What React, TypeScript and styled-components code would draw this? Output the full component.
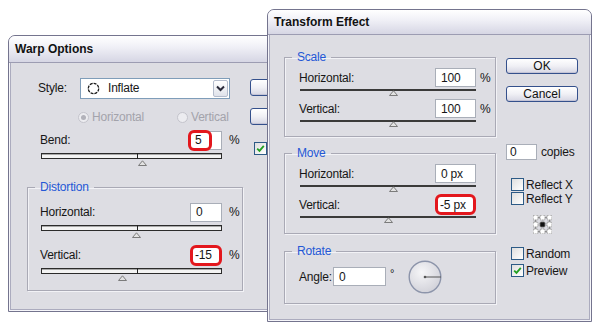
import React from 'react';
import styled, { createGlobalStyle } from 'styled-components';

const Global = createGlobalStyle`
  html, body { margin: 0; padding: 0; background: #fff; }
  body {
    font-family: "Liberation Sans", Arial, sans-serif;
    font-size: 12px;
    letter-spacing: -0.2px;
    color: #161616;
  }
`;

const Desktop = styled.div`
  position: relative;
  width: 600px;
  height: 330px;
  overflow: hidden;
  background: #fff;
`;

const Win = styled.div<{ $x: number; $y: number; $w: number; $h: number }>`
  position: absolute;
  left: ${p => p.$x}px;
  top: ${p => p.$y}px;
  width: ${p => p.$w}px;
  height: ${p => p.$h}px;
  box-sizing: border-box;
  display: flex;
  flex-direction: column;
  border: 1px solid #74748e;
  border-radius: 7px 7px 0 0;
  background: #dddde3;
  box-shadow: inset 0 0 0 1px #f6f6fa, inset 0 0 0 2px #ababbe;
  overflow: hidden;
`;

const TitleBar = styled.div<{ $h: number }>`
  flex: none;
  height: ${p => p.$h}px;
  display: flex;
  align-items: center;
  padding-left: 6px;
  border-bottom: 1px solid #9c9cb2;
  background: linear-gradient(#ffffff 0%, #f1f1f7 40%, #d6d6e4 100%);
  font-weight: bold;
  font-size: 12px;
  letter-spacing: 0;
  color: #121212;
`;

/* ---------- Warp window ---------- */

const WarpBody = styled.div`
  flex: 1;
  display: grid;
  grid-template-columns: 216px 80px;
  column-gap: 7px;
  align-items: start;
  padding-left: 18px;
`;

const Column = styled.div`
  display: flex;
  flex-direction: column;
  align-items: flex-start;
`;

const StyleRow = styled.div`
  margin-top: 14px;
  height: 22px;
  display: flex;
  align-items: center;
  padding-left: 11px;
`;

const StyleLabel = styled.span`
  width: 42px;
`;

const Select = styled.div`
  box-sizing: border-box;
  width: 150px;
  height: 21px;
  display: flex;
  align-items: center;
  background: #fff;
  border: 1px solid #7f9db9;
`;

const InflateIcon = styled.svg`
  margin-left: 6px;
  display: block;
`;

const SelectText = styled.span`
  margin-left: 8px;
`;

const DropBtn = styled.div`
  box-sizing: border-box;
  margin-left: auto;
  margin-right: 1px;
  width: 15px;
  height: 17px;
  display: flex;
  align-items: center;
  justify-content: center;
  border: 1px solid #b4bccc;
  border-radius: 2px;
  background: linear-gradient(#ffffff, #dfe2ea);
`;

const RadioRow = styled.div`
  margin-top: 11px;
  height: 11px;
  display: grid;
  grid-template-columns: 99px auto;
  padding-left: 51px;
  color: #a3a3ab;
`;

const RadioItem = styled.label`
  display: flex;
  align-items: center;
  gap: 3px;
`;

const Radio = styled.span<{ $on?: boolean }>`
  box-sizing: border-box;
  width: 11px;
  height: 11px;
  border-radius: 50%;
  border: 1px solid #c4c4cc;
  background: #ececf0;
  display: flex;
  align-items: center;
  justify-content: center;
  &::after {
    content: '';
    width: 5px;
    height: 5px;
    border-radius: 50%;
    background: ${p => (p.$on ? '#b2b2ba' : 'transparent')};
  }
`;

const WarpParamGrid = styled.div<{ $mt: number; $ml?: number }>`
  margin-top: ${p => p.$mt}px;
  margin-left: ${p => p.$ml ?? 0}px;
  width: 203px;
  display: grid;
  grid-template-columns: 1fr 32px 21px;
  grid-template-rows: 20px 6px;
  row-gap: 3px;
  align-items: center;
`;

const Unit = styled.span<{ $pl: number }>`
  padding-left: ${p => p.$pl}px;
`;

const WarpTrack = styled.div`
  grid-column: 1 / 3;
  position: relative;
  align-self: stretch;
  box-sizing: border-box;
  margin-left: 1px;
  border: 1px solid #2b2b2b;
  background: linear-gradient(#a8a8a8 0 1px, #f3f3f3 1px);
  &::after {
    content: '';
    position: absolute;
    left: 53%;
    top: -1px;
    bottom: -1px;
    width: 1px;
    background: #222;
  }
`;

const TxTrack = styled.div`
  grid-column: 1 / 3;
  position: relative;
  align-self: stretch;
  margin-left: 1px;
  background: #3a3a3a;
`;

const ThumbSvg = styled.svg<{ $pos: number; $top: number }>`
  position: absolute;
  left: calc(${p => p.$pos}% - 4.5px);
  top: ${p => p.$top}px;
  display: block;
`;

const Field = styled.div<{ $w: number; $h?: number; $mark?: boolean; $pl?: number }>`
  position: relative;
  box-sizing: border-box;
  width: ${p => p.$w}px;
  height: ${p => p.$h ?? 19}px;
  display: flex;
  align-items: center;
  padding-left: ${p => (p.$mark ? 2 : p.$pl ?? 5)}px;
  background: #fff;
  border: ${p => (p.$mark ? '3px solid #e3171d' : '1px solid #a9aeb8')};
  border-radius: ${p => (p.$mark ? '6px' : '0')};
`;

const PartMark = styled.span`
  position: absolute;
  left: -3px;
  top: -2px;
  width: 24px;
  height: 21px;
  box-sizing: border-box;
  border: 3px solid #e3171d;
  border-radius: 6px;
  display: flex;
  align-items: center;
  padding-left: 4px;
  background: #fff;
`;

const Group = styled.fieldset<{ $w: number; $mt: number; $pt: number; $pb: number; $pl: number }>`
  box-sizing: border-box;
  width: ${p => p.$w}px;
  margin: ${p => p.$mt}px 0 0 0;
  padding: ${p => p.$pt}px 0 ${p => p.$pb}px ${p => p.$pl}px;
  min-inline-size: 0;
  border: 1px solid #a9a9b5;
  box-shadow: inset 1px 1px 0 #f2f2f6, 1px 1px 0 #f2f2f6;
`;

const Legend = styled.legend<{ $ml: number }>`
  padding: 0 5px;
  margin-left: ${p => p.$ml}px;
  line-height: 14px;
  color: #2458d6;
`;

const WarpSide = styled.div`
  display: flex;
  flex-direction: column;
  align-items: flex-start;
`;

const Btn = styled.div<{ $mt: number; $h: number }>`
  box-sizing: border-box;
  margin-top: ${p => p.$mt}px;
  width: 72px;
  height: ${p => p.$h}px;
  display: flex;
  align-items: center;
  justify-content: center;
  border: 1px solid #34508c;
  border-radius: 3px;
  background: linear-gradient(#ffffff 0%, #f0f0f5 50%, #d6d6e3 100%);
  box-shadow: inset 0 -1px 0 #c4c4d6;
  letter-spacing: 0;
  color: #111;
`;

const CheckRow = styled.label<{ $mt: number; $ml: number }>`
  margin-top: ${p => p.$mt}px;
  margin-left: ${p => p.$ml}px;
  height: 13px;
  display: flex;
  align-items: center;
  gap: 2px;
`;

const Box = styled.span`
  box-sizing: border-box;
  width: 13px;
  height: 13px;
  flex: none;
  display: flex;
  align-items: center;
  justify-content: center;
  border: 1px solid #2c5a86;
  background: linear-gradient(135deg, #dedede, #ffffff);
`;

/* ---------- Transform window ---------- */

const TxBody = styled.div`
  flex: 1;
  display: grid;
  grid-template-columns: 212px 72px;
  column-gap: 10px;
  align-items: start;
  padding: 15px 0 0 16px;
`;

const TxParamGrid = styled.div<{ $mt: number }>`
  margin-top: ${p => p.$mt}px;
  display: grid;
  grid-template-columns: 1fr 41px 19px;
  grid-template-rows: 19px 2px;
  row-gap: 2px;
  align-items: center;
`;

const RotateRow = styled.div`
  display: flex;
  align-items: center;
  height: 33px;
`;

const AngleLabel = styled.span`
  width: 34px;
`;

const Degree = styled.span`
  width: 6px;
  margin-left: 4px;
  font-size: 11px;
  margin-top: -8px;
`;

const DialSvg = styled.svg`
  margin-left: 12px;
  display: block;
`;

const TxSide = styled.div`
  display: flex;
  flex-direction: column;
  align-items: flex-start;
`;

const CopiesRow = styled.div`
  margin-top: 42px;
  display: flex;
  align-items: center;
  gap: 4px;
`;

const RegSvg = styled.svg`
  margin-top: 10px;
  margin-left: 27px;
  display: block;
`;

/* ---------- pieces ---------- */

const Thumb = ({ pos, top }: { pos: number; top: number }) => (
  <ThumbSvg $pos={pos} $top={top} width="9" height="6" viewBox="0 0 9 6">
    <polygon points="0.5,5.5 4.5,0.8 8.5,5.5" fill="#e2e2e2" stroke="#7b7b7b" strokeWidth="1" />
  </ThumbSvg>
);

const Check = () => (
  <svg width="9" height="9" viewBox="0 0 9 9">
    <path d="M1.2 4.6 L3.5 6.9 L7.8 1.8" fill="none" stroke="#22a022" strokeWidth="1.8" />
  </svg>
);

type WarpParamProps = {
  label: string;
  value: string;
  mark?: 'part' | 'full';
  pos: number;
  mt: number;
  ml?: number;
};

const WarpParam = ({ label, value, mark, pos, mt, ml }: WarpParamProps) => (
  <WarpParamGrid $mt={mt} $ml={ml}>
    <span>{label}</span>
    {mark === 'part' ? (
      <Field $w={32}>
        <PartMark>{value}</PartMark>
      </Field>
    ) : (
      <Field $w={32} $h={mark === 'full' ? 21 : 19} $mark={mark === 'full'}>
        {value}
      </Field>
    )}
    <Unit $pl={7}>%</Unit>
    <WarpTrack>
      <Thumb pos={pos} top={6} />
    </WarpTrack>
  </WarpParamGrid>
);

type TxParamProps = { label: string; value: string; unit: string; mark?: boolean; pos: number; mt: number };

const TxParam = ({ label, value, unit, mark, pos, mt }: TxParamProps) => (
  <TxParamGrid $mt={mt}>
    <span>{label}</span>
    <Field $w={41} $h={mark ? 21 : 19} $mark={mark}>
      {value}
    </Field>
    <Unit $pl={4}>{unit}</Unit>
    <TxTrack>
      <Thumb pos={pos} top={1} />
    </TxTrack>
  </TxParamGrid>
);

const regPts = [2.5, 9.5, 16.5];

export default function App() {
  return (
    <>
      <Global />
      <Desktop>
        <Win $x={8} $y={35} $w={330} $h={277}>
          <TitleBar $h={26}>Warp Options</TitleBar>
          <WarpBody>
            <Column>
              <StyleRow>
                <StyleLabel>Style:</StyleLabel>
                <Select>
                  <InflateIcon width="13" height="13" viewBox="0 0 13 13">
                    <circle cx="6.5" cy="6.5" r="5.2" fill="#fff" stroke="#1a1a1a" strokeWidth="1.3" strokeDasharray="3 1" />
                  </InflateIcon>
                  <SelectText>Inflate</SelectText>
                  <DropBtn>
                    <svg width="9" height="7" viewBox="0 0 9 7">
                      <path d="M1 1.5 L4.5 5 L8 1.5" fill="none" stroke="#2a2a3a" strokeWidth="2" />
                    </svg>
                  </DropBtn>
                </Select>
              </StyleRow>
              <RadioRow>
                <RadioItem>
                  <Radio $on />
                  Horizontal
                </RadioItem>
                <RadioItem>
                  <Radio />
                  Vertical
                </RadioItem>
              </RadioRow>
              <WarpParam label="Bend:" value="5" mark="part" pos={56} mt={9} ml={13} />
              <Group $w={216} $mt={21} $pt={8} $pb={16} $pl={12}>
                <Legend $ml={-5}>Distortion</Legend>
                <WarpParam label="Horizontal:" value="0" pos={53} mt={0} />
                <WarpParam label="Vertical:" value="-15" mark="full" pos={45} mt={14} />
              </Group>
            </Column>
            <WarpSide>
              <Btn $mt={16} $h={17} />
              <Btn $mt={12} $h={17} />
              <CheckRow $mt={17} $ml={4}>
                <Box>
                  <Check />
                </Box>
              </CheckRow>
            </WarpSide>
          </WarpBody>
        </Win>

        <Win $x={267} $y={9} $w={325} $h={313}>
          <TitleBar $h={24}>Transform Effect</TitleBar>
          <TxBody>
            <Column>
              <Group $w={212} $mt={0} $pt={4} $pb={14} $pl={14}>
                <Legend $ml={-7}>Scale</Legend>
                <TxParam label="Horizontal:" value="100" unit="%" pos={53} mt={0} />
                <TxParam label="Vertical:" value="100" unit="%" pos={53} mt={8} />
              </Group>
              <Group $w={212} $mt={9} $pt={4} $pb={15} $pl={14}>
                <Legend $ml={-7}>Move</Legend>
                <TxParam label="Horizontal:" value="0 px" unit="" pos={53} mt={0} />
                <TxParam label="Vertical:" value="-5 px" unit="" mark pos={50} mt={8} />
              </Group>
              <Group $w={212} $mt={10} $pt={2} $pb={10} $pl={14}>
                <Legend $ml={-7}>Rotate</Legend>
                <RotateRow>
                  <AngleLabel>Angle:</AngleLabel>
                  <Field $w={53}>0</Field>
                  <Degree>°</Degree>
                  <DialSvg width="34" height="34" viewBox="0 0 34 34">
                    <defs>
                      <radialGradient id="dialFill" cx="40%" cy="35%" r="70%">
                        <stop offset="0%" stopColor="#f6f6f8" />
                        <stop offset="100%" stopColor="#d0d0d8" />
                      </radialGradient>
                    </defs>
                    <circle cx="17" cy="17" r="15.8" fill="url(#dialFill)" stroke="#8c94aa" strokeWidth="1.4" />
                    <line x1="17" y1="17" x2="33" y2="17" stroke="#555" strokeWidth="1" />
                    <circle cx="17" cy="17" r="1.3" fill="#555" />
                  </DialSvg>
                </RotateRow>
              </Group>
            </Column>
            <TxSide>
              <Btn $mt={8} $h={16}>OK</Btn>
              <Btn $mt={12} $h={16}>Cancel</Btn>
              <CopiesRow>
                <Field $w={31} $h={16} $pl={3}>0</Field>
                <span>copies</span>
              </CopiesRow>
              <CheckRow $mt={18} $ml={5}>
                <Box />
                Reflect X
              </CheckRow>
              <CheckRow $mt={1} $ml={5}>
                <Box />
                Reflect Y
              </CheckRow>
              <RegSvg width="19" height="19" viewBox="0 0 19 19">
                <rect x="2.5" y="2.5" width="14" height="14" fill="none" stroke="#9a9a9a" strokeWidth="1" />
                {regPts.map(cy =>
                  regPts.map(cx => (
                    <rect
                      key={`${cx}-${cy}`}
                      x={cx - 2.5}
                      y={cy - 2.5}
                      width="5"
                      height="5"
                      rx="1.2"
                      fill={cx === 9.5 && cy === 9.5 ? '#111' : '#fff'}
                      stroke="#707070"
                      strokeWidth="0.9"
                      strokeDasharray={cx === 9.5 && cy === 9.5 ? undefined : '1 0.6'}
                    />
                  ))
                )}
              </RegSvg>
              <CheckRow $mt={13} $ml={5}>
                <Box />
                Random
              </CheckRow>
              <CheckRow $mt={4} $ml={5}>
                <Box>
                  <Check />
                </Box>
                Preview
              </CheckRow>
            </TxSide>
          </TxBody>
        </Win>
      </Desktop>
    </>
  );
}
